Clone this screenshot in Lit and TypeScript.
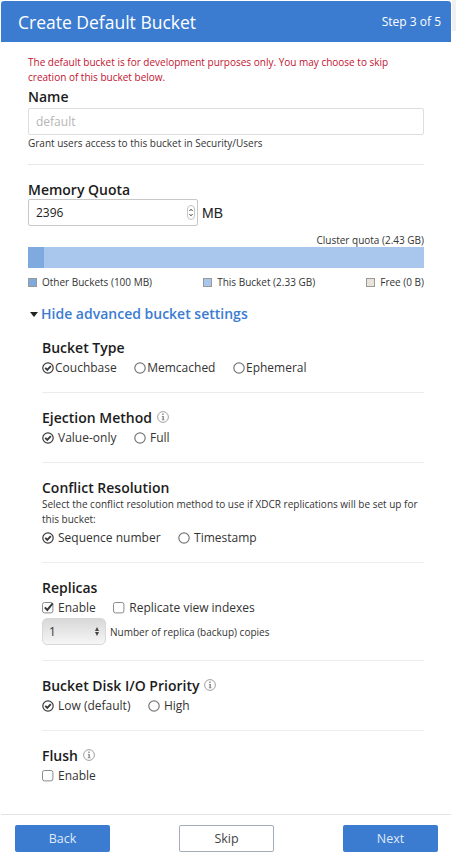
import { LitElement, html, css, svg } from "lit";
import { customElement } from "lit/decorators.js";

const infoIcon = html`<svg class="info" width="12" height="12" viewBox="0 0 12 12">
  ${svg`<circle cx="6" cy="6" r="5.4" fill="none" stroke="#a0a0a0" stroke-width="1"></circle>
  <path d="M5.2 2.6h1.5v1.4H5.2zM4.8 5h2.1v3.4h.8v.8H4.6v-.8h.8V5.8h-.6z" fill="#8c8c8c"></path>`}
</svg>`;

const radio = (checked: boolean) => html`<svg class="ctl" width="12" height="12" viewBox="0 0 12 12">
  ${svg`<circle cx="6" cy="6" r="5.2" fill="#fff" stroke=${checked ? "#3a3a3a" : "#777"} stroke-width="1.2"></circle>`}
  ${checked
    ? svg`<path d="M3.2 5.9l2.1 2.1 3.5-3.8" fill="none" stroke="#3a3a3a" stroke-width="1.9"></path>`
    : ""}
</svg>`;

const checkbox = (checked: boolean) => html`<svg class="ctl" width="12" height="12" viewBox="0 0 12 12">
  ${svg`<rect x=".5" y=".5" width="10.4" height="10.4" rx="2" fill="#fff" stroke="#8a8a8a"></rect>`}
  ${checked
    ? svg`<path d="M2.8 5.4l2.5 2.6 5.4-6.6" fill="none" stroke="#3a3a3a" stroke-width="2"></path>`
    : ""}
</svg>`;

const spinner = html`<svg class="spin" width="8" height="15" viewBox="0 0 8 15">
  ${svg`<rect x=".5" y=".5" width="7" height="14" rx="3.5" fill="#fff" stroke="#c4c4c4"></rect>
  <path d="M2.4 6l1.6-1.8L5.6 6M2.4 9l1.6 1.8L5.6 9" fill="none" stroke="#444" stroke-width="1"></path>`}
</svg>`;

@customElement("app-root")
export class AppRoot extends LitElement {
  static styles = css`
    :host {
      display: flex;
      align-items: flex-start;
      height: 863px;
      overflow: hidden;
      background: #fff;
      font-family: "Open Sans", sans-serif;
      color: #222;
    }
    .dialog {
      width: 450px;
      flex: none;
      margin-left: 1px;
      padding-top: 1px;
    }
    .edge {
      width: 4px;
      height: 31px;
      margin-left: 1px;
      background: #f0f0f0;
    }
    .header {
      height: 41px;
      display: flex;
      align-items: center;
      justify-content: space-between;
      padding: 0 10px 0 17px;
      background: #3b7cd1;
      color: #fff;
      border-radius: 3px 3px 0 0;
    }
    .title {
      font-size: 17.5px;
      font-weight: 500;
    }
    .step {
      font-size: 12px;
      font-weight: 500;
    }
    .body {
      padding: 13px 27px 0;
    }
    .warning {
      font-size: 10px;
      line-height: 15px;
      color: #c4122f;
    }
    .label {
      font-size: 14px;
      font-weight: 600;
      line-height: 18px;
      color: #1c1c1c;
    }
    .name-label {
      margin-top: 3px;
    }
    .text-input {
      height: 27px;
      box-sizing: border-box;
      margin-top: 2px;
      padding-left: 7px;
      display: flex;
      align-items: center;
      border: 1px solid #dedede;
      border-radius: 2px;
      font-size: 12px;
      color: #b5b5b5;
    }
    .hint {
      margin-top: 1px;
      font-size: 10px;
      line-height: 15px;
      color: #333;
    }
    hr {
      border: 0;
      border-top: 1px solid #e8e8e8;
      margin: 13px 0 16px;
    }
    .quota-row {
      display: flex;
      align-items: center;
      gap: 4px;
    }
    .number {
      width: 170px;
      height: 27px;
      box-sizing: border-box;
      display: flex;
      align-items: center;
      justify-content: space-between;
      padding: 0 2px 0 7px;
      border: 1px solid #c8c8c8;
      border-radius: 2px;
      font-size: 12px;
    }
    .unit {
      font-family: "Liberation Sans", sans-serif;
      font-size: 14px;
    }
    .cluster {
      font-size: 10px;
      line-height: 14px;
      text-align: right;
      margin-top: 7px;
      color: #333;
    }
    .bar {
      display: flex;
      height: 21px;
      background: #a9c7ec;
    }
    .bar div {
      width: 16px;
      background: #7eaae0;
    }
    .legend {
      display: flex;
      justify-content: space-between;
      margin-top: 7px;
      font-size: 10px;
      line-height: 14px;
      color: #333;
    }
    .legend span {
      display: flex;
      align-items: center;
      gap: 5px;
    }
    .legend i {
      width: 7px;
      height: 7px;
      border: 1px solid #999;
    }
    .swatch-other {
      background: #7eaae0;
    }
    .swatch-this {
      background: #a9c7ec;
    }
    .swatch-free {
      background: #e8e4da;
    }
    .toggle {
      display: flex;
      align-items: center;
      gap: 3px;
      margin-top: 15px;
      font-size: 14px;
      font-weight: 600;
      line-height: 20px;
      color: #3b7cd1;
    }
    .caret {
      width: 0;
      height: 0;
      margin-left: 2px;
      border: 4.5px solid transparent;
      border-top: 5px solid #222;
      border-bottom: 0;
    }
    .advanced {
      padding: 15px 0 0 14px;
    }
    .section {
      padding-bottom: 16px;
      margin-bottom: 16px;
      border-bottom: 1px solid #ececec;
    }
    .section.replicas {
      padding-bottom: 15px;
    }
    .section.last {
      border-bottom: 0;
      margin-bottom: 0;
    }
    .section-label {
      display: flex;
      align-items: center;
      gap: 5px;
      font-size: 14px;
      font-weight: 600;
      line-height: 18px;
      color: #1c1c1c;
    }
    .info {
      margin-top: -3px;
    }
    .options {
      display: flex;
      align-items: center;
      gap: 17.5px;
      margin-top: 3px;
      font-size: 12px;
      line-height: 16px;
      color: #333;
    }
    .options span {
      display: flex;
      align-items: center;
      gap: 4px;
    }
    .options.tight span {
      gap: 1px;
    }
    .ctl {
      overflow: visible;
    }
    .desc {
      font-size: 10px;
      line-height: 15px;
      color: #333;
    }
    .select-row {
      display: flex;
      align-items: center;
      gap: 4px;
      margin-top: 2px;
      font-size: 10px;
      color: #333;
    }
    .select {
      width: 64px;
      height: 27px;
      box-sizing: border-box;
      display: flex;
      align-items: center;
      justify-content: space-between;
      padding: 0 6px 0 6px;
      border: 1px solid #d8d8d8;
      border-radius: 5px;
      background: linear-gradient(#d8d8d8, #f6f6f6);
      font-size: 12px;
    }
    .arrows {
      display: flex;
      flex-direction: column;
      gap: 1px;
    }
    .arrows i {
      width: 0;
      height: 0;
      border: 2.5px solid transparent;
    }
    .arrows i:first-child {
      border-top: 0;
      border-bottom: 4px solid #444;
    }
    .arrows i:last-child {
      border-bottom: 0;
      border-top: 4px solid #444;
    }
    .footer {
      display: flex;
      justify-content: space-between;
      margin-top: 14px;
      padding: 10px 13px 0 14px;
      border-top: 1px solid #e4e4e4;
    }
    .btn {
      width: 95px;
      height: 27px;
      box-sizing: border-box;
      display: flex;
      align-items: center;
      justify-content: center;
      border-radius: 2px;
      font-size: 12.5px;
      background: #3b7cd1;
      color: #dfe9f8;
    }
    .btn.outline {
      background: #fff;
      border: 1px solid #a3acb8;
      color: #444;
    }
  `;

  render() {
    return html`
      <div class="dialog">
        <div class="header">
          <span class="title">Create Default Bucket</span>
          <span class="step">Step 3 of 5</span>
        </div>
        <div class="body">
          <div class="warning">
            The default bucket is for development purposes only. You may choose to skip creation of this bucket below.
          </div>
          <div class="label name-label">Name</div>
          <div class="text-input">default</div>
          <div class="hint">Grant users access to this bucket in Security/Users</div>
          <hr />
          <div class="label">Memory Quota</div>
          <div class="quota-row">
            <div class="number">2396 ${spinner}</div>
            <span class="unit">MB</span>
          </div>
          <div class="cluster">Cluster quota (2.43 GB)</div>
          <div class="bar"><div></div></div>
          <div class="legend">
            <span><i class="swatch-other"></i>Other Buckets (100 MB)</span>
            <span><i class="swatch-this"></i>This Bucket (2.33 GB)</span>
            <span><i class="swatch-free"></i>Free (0 B)</span>
          </div>
          <div class="toggle"><span class="caret"></span>Hide advanced bucket settings</div>
          <div class="advanced">
            <div class="section">
              <div class="section-label">Bucket Type</div>
              <div class="options tight">
                <span>${radio(true)}Couchbase</span>
                <span>${radio(false)}Memcached</span>
                <span>${radio(false)}Ephemeral</span>
              </div>
            </div>
            <div class="section">
              <div class="section-label">Ejection Method ${infoIcon}</div>
              <div class="options">
                <span>${radio(true)}Value-only</span>
                <span>${radio(false)}Full</span>
              </div>
            </div>
            <div class="section">
              <div class="section-label">Conflict Resolution</div>
              <div class="desc">
                Select the conflict resolution method to use if XDCR replications will be set up for this bucket:
              </div>
              <div class="options">
                <span>${radio(true)}Sequence number</span>
                <span>${radio(false)}Timestamp</span>
              </div>
            </div>
            <div class="section replicas">
              <div class="section-label">Replicas</div>
              <div class="options">
                <span>${checkbox(true)}Enable</span>
                <span>${checkbox(false)}Replicate view indexes</span>
              </div>
              <div class="select-row">
                <div class="select">1 <span class="arrows"><i></i><i></i></span></div>
                Number of replica (backup) copies
              </div>
            </div>
            <div class="section">
              <div class="section-label">Bucket Disk I/O Priority ${infoIcon}</div>
              <div class="options">
                <span>${radio(true)}Low (default)</span>
                <span>${radio(false)}High</span>
              </div>
            </div>
            <div class="section last">
              <div class="section-label">Flush ${infoIcon}</div>
              <div class="options">
                <span>${checkbox(false)}Enable</span>
              </div>
            </div>
          </div>
        </div>
        <div class="footer">
          <div class="btn">Back</div>
          <div class="btn outline">Skip</div>
          <div class="btn">Next</div>
        </div>
      </div>
      <div class="edge"></div>
    `;
  }
}
